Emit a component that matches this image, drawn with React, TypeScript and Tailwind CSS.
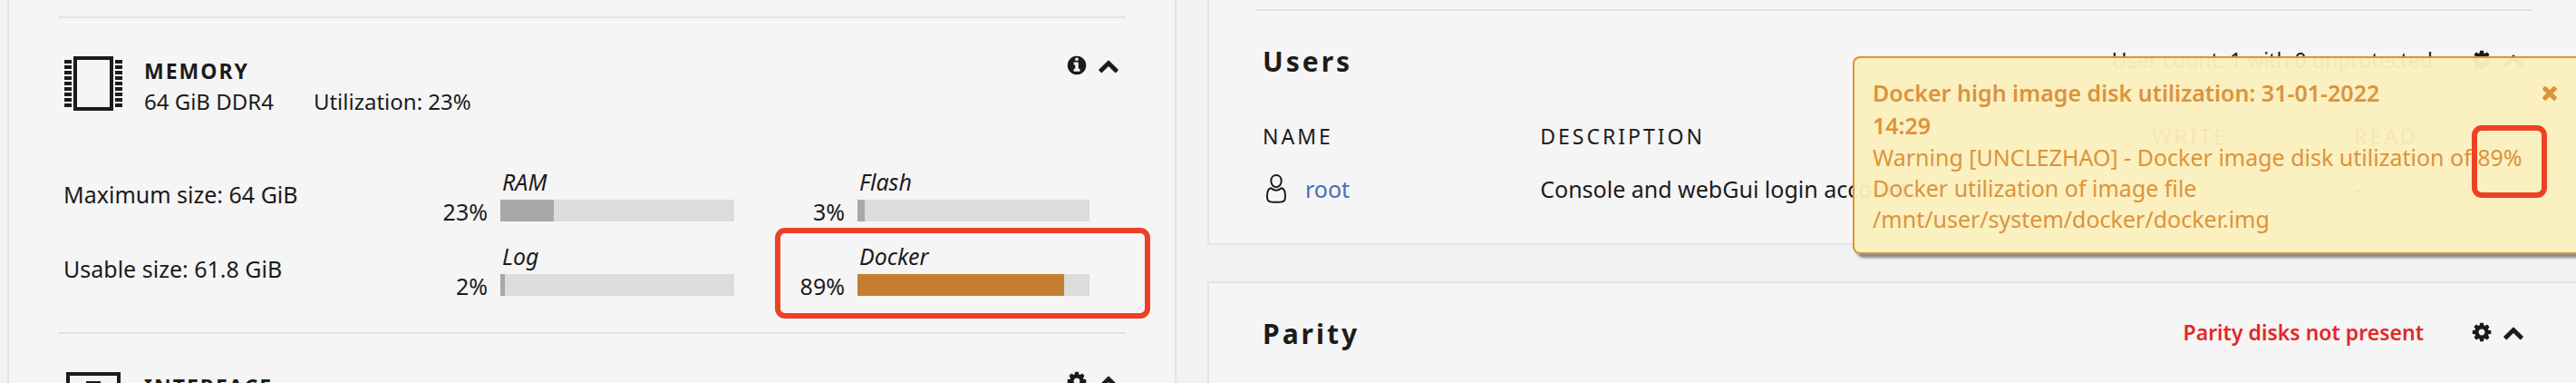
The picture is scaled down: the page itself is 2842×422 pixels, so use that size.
import type { ReactNode } from 'react';

const GLYPHS = {
  gear: 'M1024 896q0 106-75 181t-181 75-181-75-75-181 75-181 181-75 181 75 75 181zm512-109v222q0 12-8 23t-20 13l-185 28q-19 54-39 91 35 50 107 138 10 12 10 25t-9 23q-27 37-99 108t-94 71q-12 0-26-9l-138-108q-44 23-91 38-16 136-29 186-7 28-36 28H657q-14 0-24.5-8.5T621 1634l-28-184q-49-16-90-37l-141 107q-10 9-25 9-14 0-25-11-126-114-165-168-7-10-7-23 0-12 8-23 15-21 51-66.5t54-70.5q-27-50-41-99l-183-27q-13-2-21-12.5T0 1005V783q0-12 8-23t19-13l186-28q14-46 39-92-40-57-107-138-10-12-10-24 0-10 9-23 26-36 98.5-107.5T337 263q13 0 26 10l138 107q44-23 91-38 16-136 29-186 7-28 36-28h222q14 0 24.5 8.5T914 158l28 184q49 16 90 37l142-107q9-9 24-9 13 0 25 10 129 119 165 170 7 8 7 22 0 12-8 23-15 21-51 66.5t-54 70.5q26 50 41 98l183 28q13 2 21 12.5t8 23.5z',
  info: 'M1152 1376v-160q0-14-9-23t-23-9h-96v-512q0-14-9-23t-23-9h-320q-14 0-23 9t-9 23v160q0 14 9 23t23 9h96v320h-96q-14 0-23 9t-9 23v160q0 14 9 23t23 9h448q14 0 23-9t9-23zm-128-896v-160q0-14-9-23t-23-9h-192q-14 0-23 9t-9 23v160q0 14 9 23t23 9h192q14 0 23-9t9-23zm640 416q0 209-103 385.5t-279.5 279.5-385.5 103-385.5-103-279.5-279.5-103-385.5 103-385.5 279.5-279.5 385.5-103 385.5 103 279.5 279.5 103 385.5z',
  up: 'M1683 1331l-166 165q-19 19-45 19t-45-19l-531-531-531 531q-19 19-45 19t-45-19l-166-165q-19-19-19-45.5t19-45.5l742-741q19-19 45-19t45 19l742 741q19 19 19 45.5t-19 45.5z',
  times: 'M1490 1322q0 40-28 68l-136 136q-28 28-68 28t-68-28l-294-294-294 294q-28 28-68 28t-68-28l-136-136q-28-28-28-68t28-68l294-294-294-294q-28-28-28-68t28-68l136-136q28-28 68-28t68 28l294 294 294-294q28-28 68-28t68 28l136 136q28 28 28 68t-28 68l-294 294 294 294q28 28 28 68z',
};

function Glyph({ name }: { name: keyof typeof GLYPHS }) {
  return (
    <svg viewBox={name === 'gear' ? '-128 0 1792 1792' : '0 0 1792 1792'} className="size-6 fill-current" aria-hidden="true">
      <path fillRule="evenodd" d={GLYPHS[name]} />
    </svg>
  );
}

function IconButton({ name, label }: { name: keyof typeof GLYPHS; label: string }) {
  return (
    <button type="button" aria-label={label} className="block size-6 cursor-pointer">
      <Glyph name={name} />
    </button>
  );
}

function Controls({ first, firstLabel }: { first: 'gear' | 'info'; firstLabel: string }) {
  return (
    <div className="flex h-6 gap-[11px]">
      <IconButton name={first} label={firstLabel} />
      <IconButton name="up" label="Collapse" />
    </div>
  );
}

function MemoryIcon() {
  const pins = [4, 10, 16, 22, 28, 34, 40, 46, 52];
  return (
    <svg viewBox="0 0 64 60" className="h-[60px] w-16 shrink-0" aria-hidden="true">
      <rect x="12" y="2" width="40" height="56" fill="none" stroke="#1c1b1b" strokeWidth="4" />
      {pins.map((y) => (
        <g key={y} fill="#1c1b1b">
          <rect x="0" y={y} width="8" height="4" />
          <rect x="56" y={y} width="8" height="4" />
        </g>
      ))}
    </svg>
  );
}

function InterfaceIcon() {
  return (
    <svg viewBox="0 0 64 60" className="h-[60px] w-16 shrink-0" aria-hidden="true">
      <rect x="4" y="2" width="56" height="56" fill="none" stroke="#1c1b1b" strokeWidth="4" />
      <path fillRule="evenodd" fill="#1c1b1b" d="M24 10h16v6h8v32H16V16h8zM28 14v6h-8v24h24V20h-8v-6z" />
    </svg>
  );
}

function TileHeader({ icon, title, controls, children }: { icon: ReactNode; title: string; controls: ReactNode; children?: ReactNode }) {
  return (
    <header className="flex items-start pt-[42px] pr-[7px] pl-[7px]">
      {icon}
      <div className="ml-6 grow">
        <h2 className="text-[23px] leading-8 font-bold tracking-[2px]">{title}</h2>
        <div className="flex gap-11 text-[24px] leading-9">{children}</div>
      </div>
      <div className="-mt-[2px]">{controls}</div>
    </header>
  );
}

function Meter({ label, value, warn }: { label: string; value: number; warn?: boolean }) {
  return (
    <div className="grid grid-cols-[122px_1fr] content-start gap-x-[14px]">
      <div className="col-start-2 h-[38px] pl-[2px] text-[25px] leading-9 italic">{label}</div>
      <div className="col-start-1 row-start-2 text-right text-[25px] leading-[26px]">{value}%</div>
      <div role="meter" aria-label={label} aria-valuenow={value} aria-valuemin={0} aria-valuemax={100} className="col-start-2 row-start-2 h-6 bg-[#dcdcdc]">
        <div className={warn ? 'h-full bg-[#c37f2f]' : 'h-full bg-[#a8a8a8]'} style={{ width: `${value}%` }} />
      </div>
    </div>
  );
}

function MeterRow({ children, text }: { children: ReactNode; text: string }) {
  return (
    <div className="grid h-[82px] grid-cols-[346fr_394fr_392fr] pr-10 pl-[6px]">
      <div className="pt-[14px] text-[25px] leading-9">{text}</div>
      {children}
    </div>
  );
}

function Notification() {
  return (
    <section
      role="alert"
      className="absolute top-[62px] right-0 flex w-[798px] items-start rounded-l-lg border-2 border-r-0 border-[#dc933c] bg-[#fbefbc]/96 py-5 pl-5 text-[25px] leading-[34px] text-[#dc933c] shadow-[4px_4px_3px_#888888]"
    >
      <div className="grow">
        <h3 className="w-[600px] leading-9 font-semibold">Docker high image disk utilization: 31-01-2022 14:29</h3>
        <p className="whitespace-nowrap">Warning [UNCLEZHAO] - Docker image disk utilization of 89%</p>
        <p>Docker utilization of image file</p>
        <p>/mnt/user/system/docker/docker.img</p>
      </div>
      <div className="absolute top-[26px] right-[17px]">
        <IconButton name="times" label="Close" />
      </div>
      <div className="absolute top-[74px] right-8 h-20 w-[83px] rounded-[11px] border-6 border-[#ee4024]" />
    </section>
  );
}

export default function App() {
  return (
    <div className="relative grid h-screen grid-cols-[1290fr_1510fr] gap-x-[34px] overflow-hidden bg-[#f2f2f2] pl-2 font-['Noto_Sans',sans-serif] text-[#1c1b1b]">
      <main className="border-x-2 border-[#e3e3e3] bg-[#f5f5f5] px-[54px] pt-[18px]">
        <section className="relative h-[348px] border-t-2 border-[#e3e3e3]">
          <TileHeader icon={<MemoryIcon />} title="MEMORY" controls={<Controls first="info" firstLabel="Memory information" />}>
            <span>64 GiB DDR4</span>
            <span>Utilization: 23%</span>
          </TileHeader>
          <div className="pt-[52px]">
            <MeterRow text="Maximum size: 64 GiB">
              <Meter label="RAM" value={23} />
              <Meter label="Flash" value={3} />
            </MeterRow>
            <MeterRow text="Usable size: 61.8 GiB">
              <Meter label="Log" value={2} />
              <Meter label="Docker" value={89} warn />
            </MeterRow>
          </div>
          <div className="absolute top-[231px] -right-[27px] h-[100px] w-[414px] rounded-[11px] border-6 border-[#ee4024]" />
        </section>
        <section className="border-t-2 border-[#e3e3e3]">
          <TileHeader icon={<InterfaceIcon />} title="INTERFACE" controls={<Controls first="gear" firstLabel="Interface settings" />} />
        </section>
      </main>

      <aside className="flex flex-col gap-10">
        <section className="h-[270px] shrink-0 border-b-2 border-l-2 border-[#e3e3e3] bg-[#f5f5f5] pt-[10px] pr-12 pl-[52px]">
          <div className="border-t-2 border-[#e3e3e3] pr-[9px] pl-[7px]">
            <header className="flex items-start pt-9">
              <h2 className="grow text-[30px] leading-10 font-bold tracking-[3px]">Users</h2>
              <span className="mr-[42px] text-[23px] leading-9">User count: 1 with 0 unprotected</span>
              <div className="pt-[6px]">
                <Controls first="gear" firstLabel="User settings" />
              </div>
            </header>
            <table className="mt-[42px] w-full table-fixed text-left text-[25px]">
              <thead>
                <tr className="h-10 text-[23px] leading-10 tracking-[3px]">
                  <th className="w-[22%] font-normal">NAME</th>
                  <th className="w-[48.5%] font-normal">DESCRIPTION</th>
                  <th className="w-[16%] font-normal">WRITE</th>
                  <th className="font-normal">READ</th>
                </tr>
              </thead>
              <tbody>
                <tr className="h-[76px] leading-10">
                  <td>
                    <div className="flex items-center pl-1">
                      <svg viewBox="0 0 22 32" className="h-8 w-[22px]" fill="none" stroke="#1c1b1b" strokeWidth="2" strokeLinejoin="round" aria-hidden="true">
                        <path d="M11 1C7.500 1 5.300 3.700 5.300 7.300S7.600 14.200 11 14.200s5.700-3.300 5.700-6.900S14.500 1 11 1z" />
                        <path d="M5.300 15.300C2 15.600 1 19.500 1 24.500c0 3 .3 4.500 2.200 5.300 3 1.300 12.600 1.300 15.600 0 1.900-.8 2.200-2.300 2.200-5.300 0-5-1-8.900-4.300-9.200-1.700 1.700-3.600 2.400-5.700 2.400s-4-.7-5.700-2.400z" />
                      </svg>
                      <a href="#root" className="ml-[21px] text-[#486dba]">root</a>
                    </div>
                  </td>
                  <td>Console and webGui login account</td>
                  <td>-</td>
                  <td>-</td>
                </tr>
              </tbody>
            </table>
          </div>
        </section>
        <section className="grow border-t-2 border-l-2 border-[#e3e3e3] bg-[#f5f5f5] pt-9 pr-[57px] pl-[59px]">
          <header className="flex items-start">
            <h2 className="grow text-[30px] leading-10 font-bold tracking-[3px]">Parity</h2>
            <span className="mr-[52px] text-[23px] leading-9 font-semibold text-[#e22828]">Parity disks not present</span>
            <div className="pt-[6px]">
              <Controls first="gear" firstLabel="Parity settings" />
            </div>
          </header>
        </section>
      </aside>

      <Notification />
    </div>
  );
}
